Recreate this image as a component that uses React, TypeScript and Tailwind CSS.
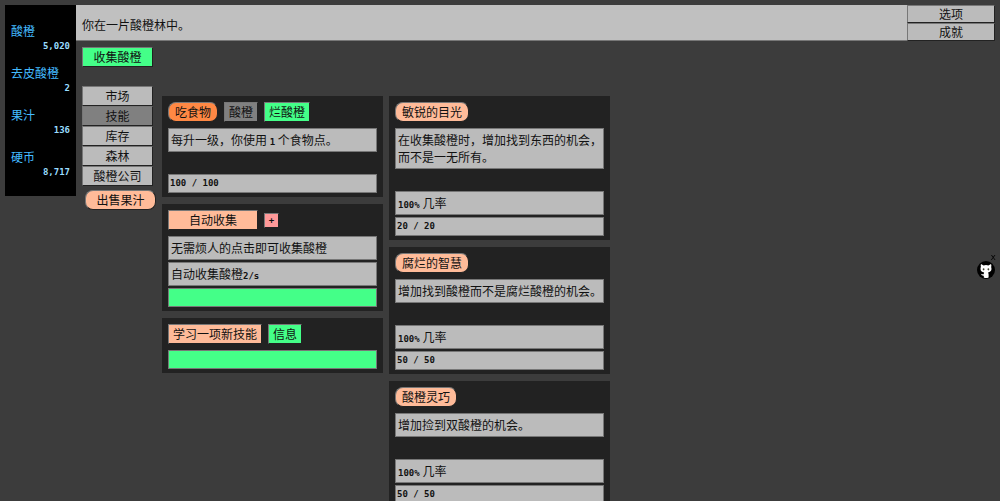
import type { ReactNode } from "react";

type Tone = "gray" | "dark" | "green" | "peach" | "orange";

const tones: Record<Tone, string> = {
  gray: "bg-[#bbbbbb]",
  dark: "bg-[#808080]",
  green: "bg-[#44ff88]",
  peach: "bg-[#ffbb99]",
  orange: "bg-[#ff8844]",
};

const bevel =
  "border border-t-[#777777] border-l-[#777777] border-r-[#222222] border-b-[#222222]";

function Button({
  tone = "gray",
  round = false,
  className = "",
  children,
}: {
  tone?: Tone;
  round?: boolean;
  className?: string;
  children: ReactNode;
}) {
  return (
    <button
      type="button"
      className={`flex min-h-[18px] items-center justify-center whitespace-nowrap leading-[18px] ${tones[tone]} ${bevel} ${round ? "rounded-lg" : ""} ${className}`}
    >
      {children}
    </button>
  );
}

function Num({ children }: { children: ReactNode }) {
  return (
    <span className="font-['DejaVu_Sans_Mono',monospace] text-[9px] leading-none font-bold">
      {children}
    </span>
  );
}

function Card({ children }: { children: ReactNode }) {
  return (
    <section className="flex flex-col gap-0.5 bg-[#222222] px-1.5 pt-1.5 pb-1">
      {children}
    </section>
  );
}

function Actions({ children }: { children: ReactNode }) {
  return <div className="mb-1 flex items-center gap-1.5">{children}</div>;
}

function Note({ children }: { children: ReactNode }) {
  return (
    <p className="border border-[#777777] bg-[#bbbbbb] pt-0.5 pb-[3px] pl-0.5 leading-[17px]">
      {children}
    </p>
  );
}

function Meter({ children }: { children?: ReactNode }) {
  return (
    <div
      className={`flex h-[19px] items-center border border-[#777777] px-px ${children ? "bg-[#bbbbbb]" : "bg-[#44ff88]"}`}
    >
      {children}
    </div>
  );
}

const resources = [
  { name: "酸橙", amount: "5,020" },
  { name: "去皮酸橙", amount: "2" },
  { name: "果汁", amount: "136" },
  { name: "硬币", amount: "8,717" },
];

const tabs = ["市场", "技能", "库存", "森林", "酸橙公司"];

const passives = [
  {
    name: "敏锐的目光",
    text: "在收集酸橙时，增加找到东西的机会，而不是一无所有。",
    level: "20 / 20",
  },
  {
    name: "腐烂的智慧",
    text: "增加找到酸橙而不是腐烂酸橙的机会。",
    level: "50 / 50",
  },
  { name: "酸橙灵巧", text: "增加捡到双酸橙的机会。", level: "50 / 50" },
];

export default function App() {
  return (
    <div className="flex h-screen items-start overflow-hidden bg-[#3c3c3c] p-[5px] font-['Noto_Sans_CJK_SC',sans-serif] text-xs text-[#111111]">
      <aside className="flex w-[71px] shrink-0 flex-col gap-3 bg-black px-1.5 pt-[17px] pb-[18px]">
        {resources.map((r) => (
          <div key={r.name} className="flex flex-col text-[#44bbff]">
            <span className="leading-[18px]">{r.name}</span>
            <span className="flex h-3 items-center justify-end text-[#99ddff]">
              <Num>{r.amount}</Num>
            </span>
          </div>
        ))}
      </aside>

      <div className="min-w-0 flex-1">
        <header className="flex h-9">
          <p className="flex flex-1 items-center border-b border-[#777777] bg-[#c0c0c0] px-1.5 pt-1">
            你在一片酸橙林中。
          </p>
          <nav className="flex w-[88px] flex-col">
            <Button className="flex-1 leading-4">选项</Button>
            <Button className="flex-1 leading-4">成就</Button>
          </nav>
        </header>

        <main className="flex items-start gap-1.5 pt-1.5 pl-1.5">
          <div className="flex w-[74px] flex-col">
            <Button tone="green" className="mr-[3px] mb-[19px]">
              收集酸橙
            </Button>
            <nav className="mr-[3px] mb-1 flex flex-col">
              {tabs.map((t) => (
                <Button key={t} tone={t === "技能" ? "dark" : "gray"}>
                  {t}
                </Button>
              ))}
            </nav>
            <Button tone="peach" round className="ml-[3px]">
              出售果汁
            </Button>
          </div>

          <div className="mt-[49px] flex w-[221px] flex-col gap-[7px]">
            <Card>
              <Actions>
                <Button tone="orange" round className="px-1.5">
                  吃食物
                </Button>
                <Button tone="dark" className="px-1">
                  酸橙
                </Button>
                <Button tone="green" className="px-1">
                  烂酸橙
                </Button>
              </Actions>
              <Note>
                每升一级，你使用 <Num>1</Num> 个食物点。
              </Note>
              <div className="mt-5">
                <Meter>
                  <Num>100 / 100</Num>
                </Meter>
              </div>
            </Card>
            <Card>
              <Actions>
                <Button tone="peach" className="w-[90px]">
                  自动收集
                </Button>
                <button
                  type="button"
                  className={`flex size-[15px] items-center justify-center bg-[#ff9999] ${bevel}`}
                >
                  <Num>+</Num>
                </button>
              </Actions>
              <Note>无需烦人的点击即可收集酸橙</Note>
              <Note>
                自动收集酸橙<Num>2/s</Num>
              </Note>
              <Meter />
            </Card>
            <Card>
              <Actions>
                <Button tone="peach" className="px-1">
                  学习一项新技能
                </Button>
                <Button tone="green" className="px-1">
                  信息
                </Button>
              </Actions>
              <Meter />
            </Card>
          </div>

          <div className="mt-[49px] flex w-[221px] flex-col gap-[7px]">
            {passives.map((p) => (
              <Card key={p.name}>
                <Actions>
                  <Button tone="peach" round className="px-1.5">
                    {p.name}
                  </Button>
                </Actions>
                <Note>{p.text}</Note>
                <div className="mt-5 flex flex-col gap-0.5">
                  <Note>
                    <Num>100%</Num> 几率
                  </Note>
                  <Meter>
                    <Num>{p.level}</Num>
                  </Meter>
                </div>
              </Card>
            ))}
          </div>
        </main>
      </div>

      <div className="fixed top-[253px] right-1 flex flex-col items-end">
        <button
          type="button"
          aria-label="关闭"
          className="-mr-0.5 h-2 px-0.5 font-['DejaVu_Sans_Mono',monospace] text-[9px] leading-[8px] text-black"
        >
          x
        </button>
        <a href="#github" aria-label="GitHub" className="mr-px">
          <svg viewBox="0 0 18 18" className="size-[18px]">
            <circle cx="9" cy="9" r="9" fill="#000" />
            <path
              d="M4 3 L6.6 4.4 Q9 3.8 11.4 4.4 L14 3 Q14.7 4.6 14.2 6 Q15.2 9.6 12.8 10.8 Q11.8 11.3 11 11.4 Q11.6 12.2 11.6 13.4 V16.4 Q9 17.4 6.8 16.4 V14.8 Q4.6 15 3.8 12.8 Q5.4 13.6 6.8 13.2 Q6.7 12.2 7.2 11.4 Q3.4 11 3.5 7.8 Q3.4 6.8 3.9 6 Q3.4 4.6 4 3Z"
              fill="#fff"
            />
            <ellipse cx="6.6" cy="8.3" rx="0.9" ry="1.1" fill="#443" />
            <ellipse cx="11.4" cy="8.3" rx="0.9" ry="1.1" fill="#443" />
          </svg>
        </a>
      </div>
    </div>
  );
}
